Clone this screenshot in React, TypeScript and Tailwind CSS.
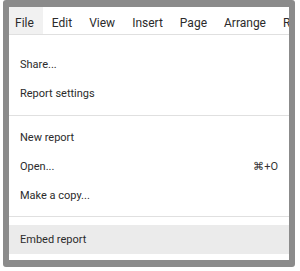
const menus = ['File', 'Edit', 'View', 'Insert', 'Page', 'Arrange', 'Resource']

type Item = { label: string; shortcut?: string; active?: boolean }

const Row = ({ label, shortcut, active }: Item) => (
	<div
		className={`flex h-[29px] shrink-0 items-center justify-between pl-[11px] pr-[11px] pt-[2px] text-[11px] text-[#2b2b2b] ${active ? 'bg-[#ebebeb]' : ''}`}
	>
		<span>{label}</span>
		{shortcut && <span className="text-[11px] text-[#333]">{shortcut}</span>}
	</div>
)

export default function App() {
	return (
		<div
			className="h-[271px] w-[300px] overflow-hidden bg-white"
			style={{ fontFamily: 'Roboto, "Liberation Sans", sans-serif' }}
		>
			<div className="ml-[3px] h-[267px] w-[292px] rounded-[3px] border-x-[6px] border-b-[7px] border-t-[7px] border-[#8b8b8b] bg-white">
				<div className="flex h-full w-full flex-col overflow-hidden">
					{/* menu bar */}
					<div className="flex h-[28px] shrink-0 items-stretch overflow-hidden border-b border-[#e0e0e0] text-[12px] text-[#2b2b2b]">
						{menus.map((m, i) => (
							<div
								key={m}
								className={`flex shrink-0 items-center pt-[5px] ${i === 0 ? 'bg-[#f1f1f1] pl-[6px] pr-[9px]' : 'pl-[9px] pr-[8px]'}`}
							>
								{m}
							</div>
						))}
					</div>

					<div className="h-[15px] shrink-0" />
					<Row label="Share..." />
					<Row label="Report settings" />
					<div className="shrink-0 pb-[7px] pt-[7px]">
						<div className="h-px bg-[#e0e0e0]" />
					</div>
					<Row label="New report" />
					<Row label="Open..." shortcut="⌘+O" />
					<Row label="Make a copy..." />
					<div className="shrink-0 pb-[8px] pt-[6px]">
						<div className="h-px bg-[#e0e0e0]" />
					</div>
					<Row label="Embed report" active />
				</div>
			</div>
		</div>
	)
}
